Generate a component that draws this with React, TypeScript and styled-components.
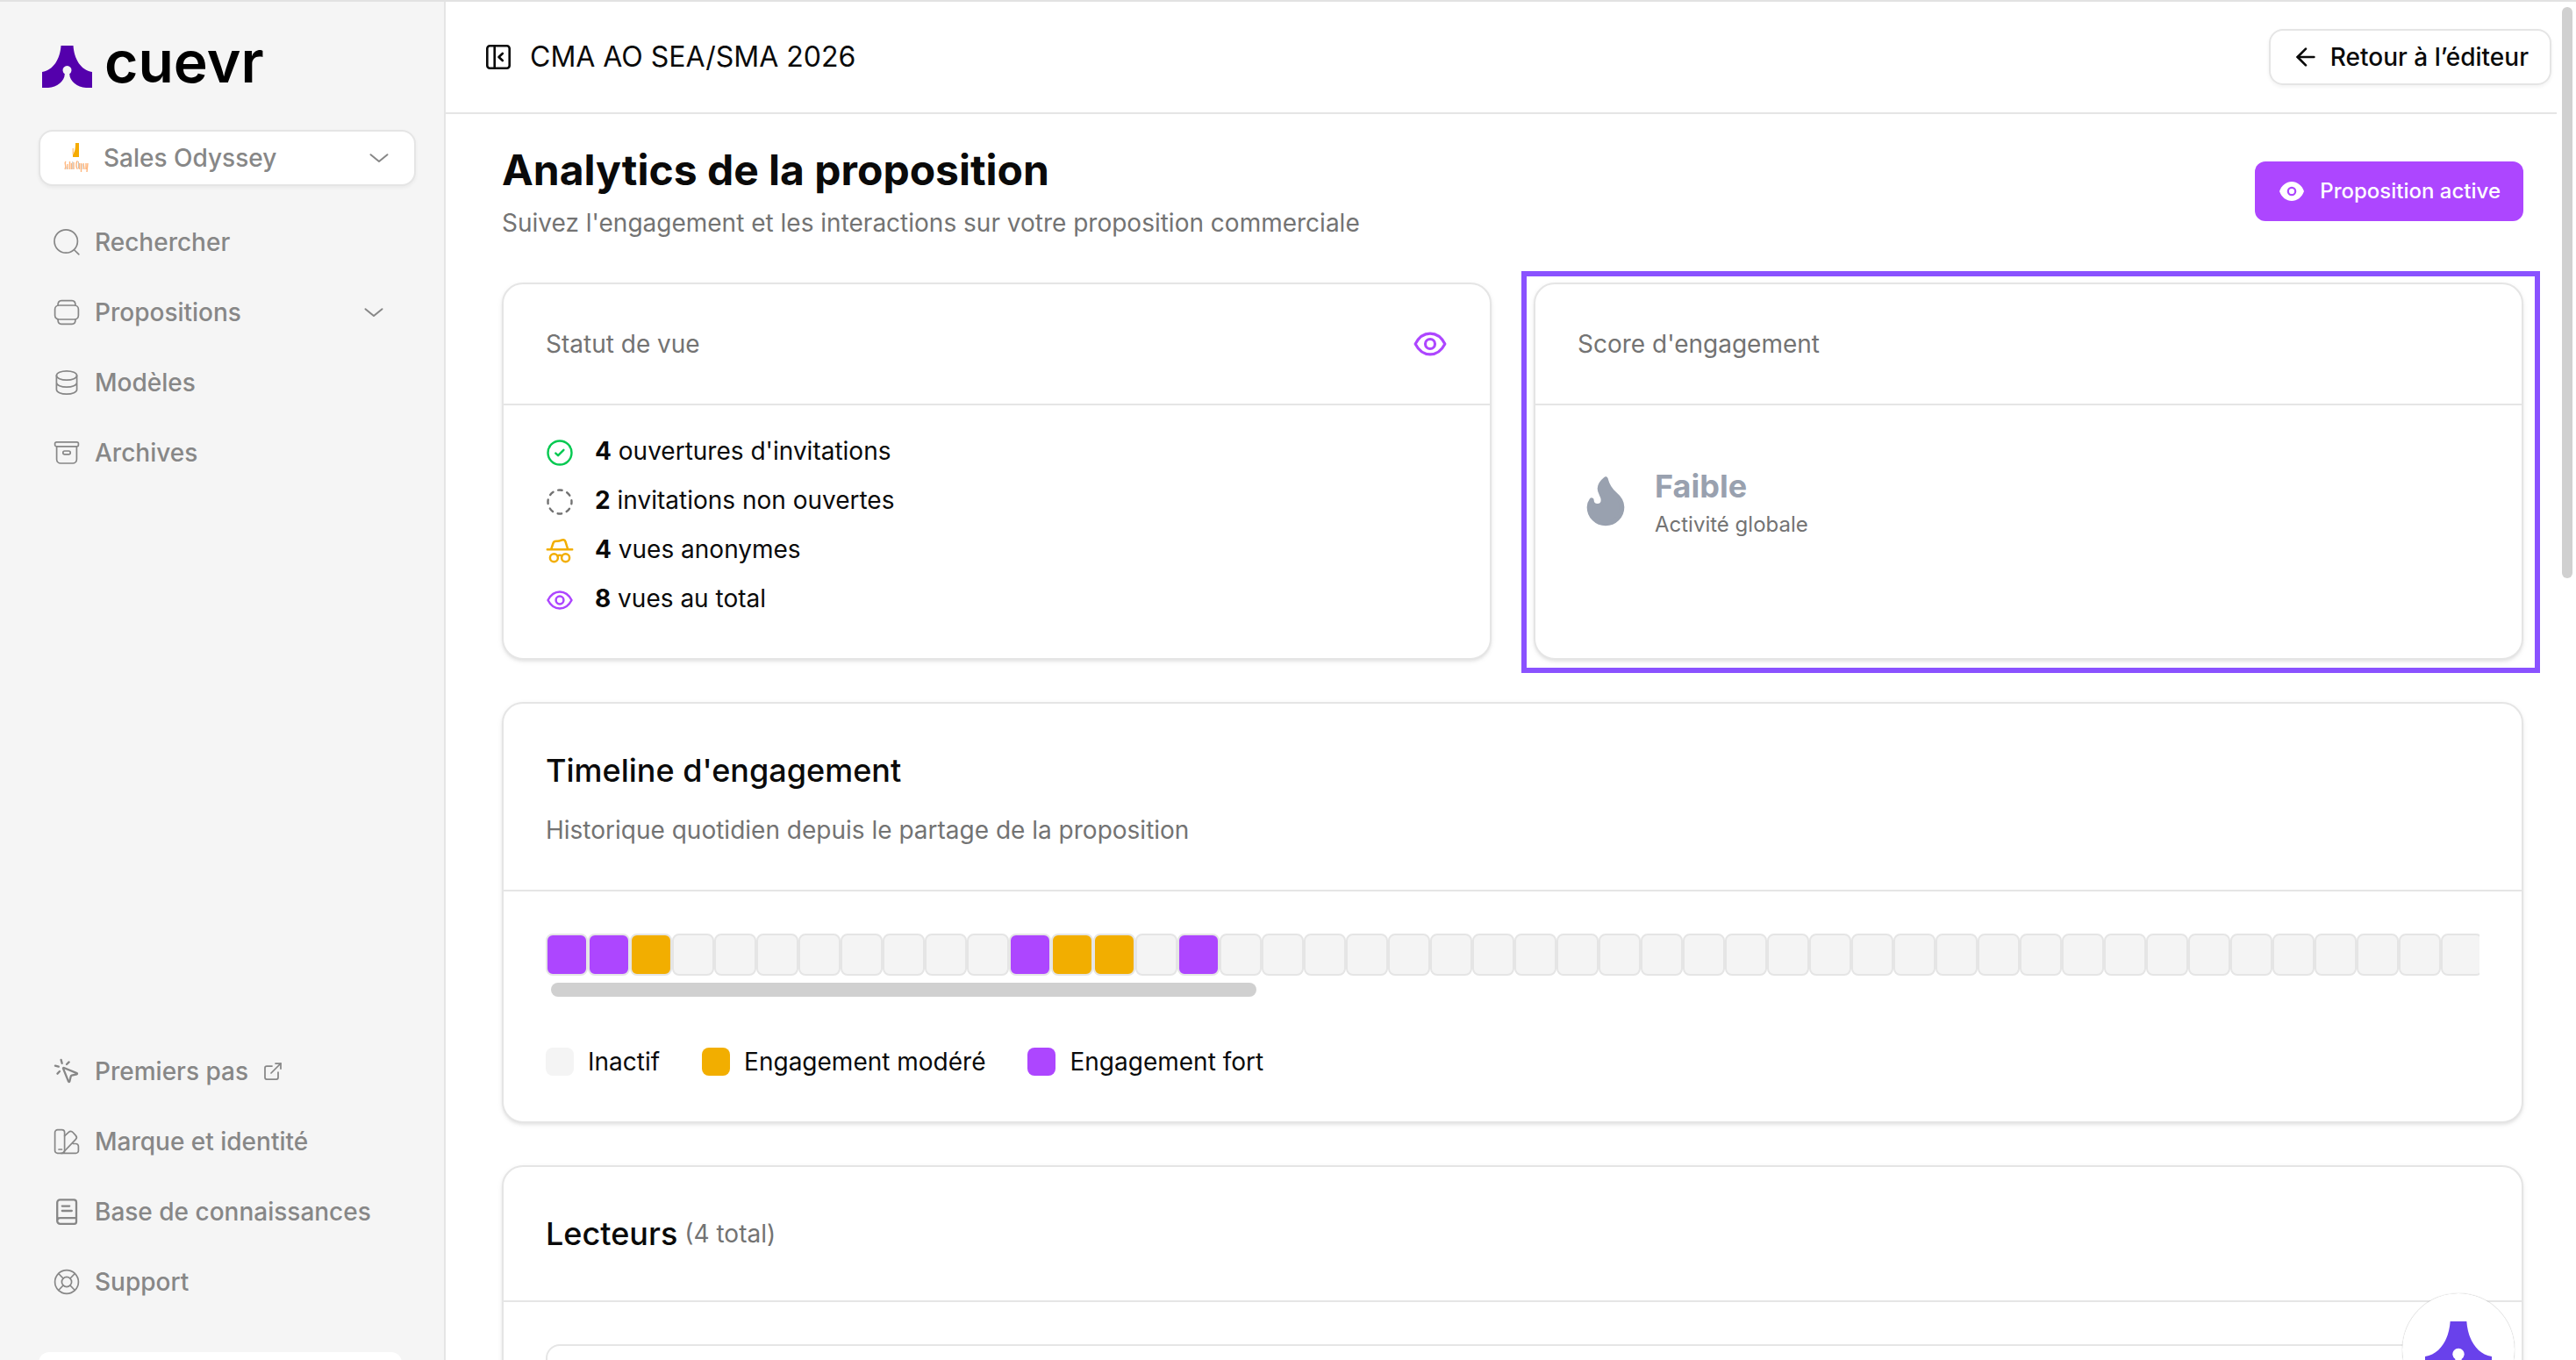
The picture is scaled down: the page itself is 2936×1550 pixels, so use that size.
import React from "react";
import styled, { createGlobalStyle } from "styled-components";
import { ArrowLeft, ExternalLink, Flame, MousePointerClick } from "lucide-react";

const color = {
  ink: "#0a0a0a",
  muted: "#737373",
  nav: "#878787",
  line: "#e5e5e5",
  panel: "#f5f5f5",
  purple: "#ad46ff",
  amber: "#f2ae00",
  green: "#05c951",
  slate: "#99a1af",
  thumb: "#d0d0d0",
  outline: "#8a52ff",
};

const GlobalStyle = createGlobalStyle`
  *, *::before, *::after { box-sizing: border-box; }
  body {
    margin: 0;
    background: #fff;
    color: ${color.ink};
    font-family: Inter, "Liberation Sans", sans-serif;
    font-size: 28px;
    line-height: 40px;
  }
  h1, h2, p, ul { margin: 0; padding: 0; }
  ul { list-style: none; }
  button, select { font: inherit; color: inherit; background: none; border: 0; padding: 0; margin: 0; }
  a { color: inherit; text-decoration: none; }
  svg { display: block; flex: none; }
`;

const Shell = styled.div`
  position: relative;
  display: flex;
  height: 100vh;
  overflow: hidden;
  border-top: 2px solid #e2e2e2;
`;

/* Sidebar */

const Sidebar = styled.aside`
  flex: none;
  display: flex;
  flex-direction: column;
  width: 508px;
  padding: 44px 32px 0 44px;
  background: ${color.panel};
  border-right: 2px solid ${color.line};
  color: ${color.nav};
  font-weight: 500;
`;

const Brand = styled.a`
  display: flex;
  align-items: center;
  gap: 14px;
  height: 60px;
  padding-left: 4px;
  color: #000;
  font-size: 66px;
  line-height: 60px;
  font-weight: 600;
`;

const BrandName = styled.span`
  padding-bottom: 12px;
`;

const Workspace = styled.label`
  display: flex;
  align-items: center;
  gap: 16px;
  height: 64px;
  margin-top: 42px;
  padding: 0 24px;
  background: #fff;
  border: 2px solid ${color.line};
  border-radius: 16px;
  box-shadow: 0 2px 4px rgba(0, 0, 0, 0.05);
`;

const WorkspaceSelect = styled.select`
  flex: 1;
  min-width: 0;
  appearance: none;
  outline: none;
`;

const Nav = styled.nav<{ $bottom?: boolean }>`
  display: flex;
  flex-direction: column;
  margin-top: ${(p) => (p.$bottom ? "auto" : "24px")};
  margin-right: 16px;
`;

const NavItem = styled.a`
  display: flex;
  align-items: center;
  gap: 16px;
  height: 80px;
  padding: 0 16px;
`;

const NavLabel = styled.span<{ $grow?: boolean }>`
  flex: ${(p) => (p.$grow ? 1 : "none")};
  text-align: left;
`;

const SidebarFooter = styled.div`
  flex: none;
  height: 9px;
  margin: 40px 16px 0 0;
`;

const FooterCard = styled.div`
  height: 120px;
  background: #fff;
  border-radius: 12px;
`;

/* Main area */

const Main = styled.main`
  flex: 1;
  min-width: 0;
  display: flex;
  flex-direction: column;
`;

const TopBar = styled.header`
  flex: none;
  display: flex;
  align-items: center;
  justify-content: space-between;
  height: 128px;
  padding: 0 6px 0 44px;
  border-bottom: 2px solid ${color.line};
`;

const Crumb = styled.div`
  display: flex;
  align-items: center;
  gap: 20px;
  font-size: 32px;
`;

const BackLink = styled.a`
  display: flex;
  align-items: center;
  gap: 12px;
  height: 64px;
  padding: 0 24px;
  border: 2px solid ${color.line};
  border-radius: 16px;
  box-shadow: 0 2px 4px rgba(0, 0, 0, 0.05);
  font-weight: 500;
`;

const Content = styled.div`
  flex: 1;
  min-height: 0;
  overflow: hidden;
  display: flex;
  flex-direction: column;
  gap: 48px;
  padding: 32px 38px 0 64px;
`;

const PageHead = styled.div`
  flex: none;
  display: flex;
  align-items: center;
  justify-content: space-between;
`;

const PageTitle = styled.h1`
  margin-bottom: 8px;
  font-size: 48px;
  line-height: 64px;
  font-weight: 700;
`;

const Muted = styled.p`
  color: ${color.muted};
`;

const ActiveButton = styled.button`
  display: flex;
  align-items: center;
  gap: 16px;
  height: 68px;
  padding: 0 26px;
  border-radius: 12px;
  background: ${color.purple};
  color: #fff;
  font-size: 24px;
  font-weight: 500;
`;

const CardRow = styled.div`
  flex: none;
  display: grid;
  grid-template-columns: 1fr 1fr;
  gap: 48px;
`;

const Card = styled.section`
  position: relative;
  flex: none;
  background: #fff;
  border: 2px solid ${color.line};
  border-radius: 24px;
  box-shadow: 0 2px 6px rgba(0, 0, 0, 0.06), 0 2px 3px rgba(0, 0, 0, 0.06);
`;

const CardHead = styled.div`
  display: flex;
  align-items: center;
  justify-content: space-between;
  padding: 48px;
  border-bottom: 2px solid ${color.line};
`;

const HeadIcon = styled.span`
  color: ${color.purple};
`;

const CardLabel = styled.h2`
  color: ${color.muted};
  font-size: 28px;
  font-weight: 400;
`;

const CardTitle = styled.h2`
  font-size: 36px;
  line-height: 56px;
  font-weight: 500;
`;

const TitleStack = styled.div`
  display: flex;
  flex-direction: column;
  gap: 20px;
`;

const TitleLine = styled.div`
  display: flex;
  align-items: center;
  gap: 8px;
`;

const StatList = styled.ul`
  display: flex;
  flex-direction: column;
  gap: 16px;
  padding: 32px 48px 48px;
`;

const Stat = styled.li<{ $tone: string }>`
  display: flex;
  align-items: flex-end;
  gap: 24px;
  height: 40px;

  svg {
    margin-bottom: 2px;
    color: ${(p) => p.$tone};
  }
  strong { font-weight: 700; }
`;

const Score = styled.div`
  display: flex;
  align-items: center;
  gap: 24px;
  padding: 64px 48px;
  color: ${color.slate};
`;

const ScoreName = styled.p`
  font-size: 36px;
  line-height: 56px;
  font-weight: 700;
`;

const ScoreNote = styled.p`
  color: ${color.muted};
  font-size: 24px;
  line-height: 32px;
`;

const Outline = styled.div`
  position: absolute;
  inset: -15px -21px -17px -16px;
  border: 6px solid ${color.outline};
  pointer-events: none;
`;

/* Timeline */

type Level = "none" | "mid" | "high";

const levelColor: Record<Level, string> = {
  none: "#f4f4f4",
  mid: color.amber,
  high: color.purple,
};

const CardBody = styled.div`
  padding: 48px;
`;

const Days = styled.ul`
  display: flex;
  overflow: hidden;
`;

const Day = styled.li<{ $level: Level }>`
  flex: none;
  width: 48px;
  height: 48px;
  background: ${(p) => levelColor[p.$level]};
  border: 2px solid ${color.line};
  border-radius: 8px;
`;

const DaysScroll = styled.div`
  margin: 8px 6px 54px;
`;

const DaysThumb = styled.div`
  height: 16px;
  border-radius: 8px;
  background: ${color.thumb};
`;

const Legend = styled.ul`
  display: flex;
  gap: 48px;
`;

const LegendItem = styled.li`
  display: flex;
  align-items: center;
  gap: 16px;
`;

const Swatch = styled.span<{ $level: Level }>`
  width: 32px;
  height: 32px;
  border-radius: 8px;
  background: ${(p) => levelColor[p.$level]};
`;

const ReaderBox = styled.div`
  height: 200px;
  border: 2px solid ${color.line};
  border-radius: 16px;
`;

/* Window chrome */

const Gutter = styled.div`
  flex: none;
  width: 22px;
  padding: 6px 4px 0 6px;
`;

const Thumb = styled.div`
  height: 42vh;
  border-radius: 6px;
  background: ${color.thumb};
`;

const ChatButton = styled.button`
  position: absolute;
  right: 70px;
  bottom: -52px;
  display: flex;
  align-items: center;
  justify-content: center;
  width: 128px;
  height: 128px;
  border-radius: 50%;
  background: #fff;
  box-shadow: 0 0 1px rgba(0, 0, 0, 0.4);
`;

/* Icons, drawn on a 32-unit grid */

type IconProps = { size?: number; weight?: number; children?: React.ReactNode };

const Icon = ({ size = 32, weight = 1.7, children }: IconProps) => (
  <svg
    width={size}
    height={size}
    viewBox="0 0 32 32"
    fill="none"
    stroke="currentColor"
    strokeWidth={weight}
    strokeLinecap="round"
    strokeLinejoin="round"
    aria-hidden="true"
  >
    {children}
  </svg>
);

const Chevron = () => (
  <Icon weight={2}>
    <path d="M6.5 12.2 16 20 25.5 12.2" />
  </Icon>
);

const SearchIcon = () => (
  <Icon>
    <circle cx="15.2" cy="15" r="13.2" />
    <path d="M24.8 25 29.8 29.8" />
  </Icon>
);

const StackIcon = () => (
  <Icon>
    <rect x="2.6" y="8" width="26.8" height="16" rx="4.5" />
    <path d="M6 8C6 4.5 7.2 2.6 10 2.6h12C24.8 2.6 26 4.5 26 8M6 24c0 3.5 1.2 5.4 4 5.4h12c2.8 0 4-1.9 4-5.4" />
  </Icon>
);

const DatabaseIcon = () => (
  <Icon>
    <ellipse cx="16" cy="8" rx="11.6" ry="5.2" />
    <path d="M4.4 8v16c0 2.9 5.2 5.2 11.6 5.2S27.6 26.9 27.6 24V8M4.4 16c0 2.9 5.2 5.2 11.6 5.2S27.6 18.9 27.6 16" />
  </Icon>
);

const ArchiveIcon = () => (
  <Icon>
    <rect x="2.6" y="3.8" width="26.8" height="5" rx="1.8" />
    <path d="M4.6 9v14.5a4.5 4.5 0 0 0 4.5 4.5h13.8a4.5 4.5 0 0 0 4.5-4.5V9" />
    <rect x="11.8" y="14" width="8.4" height="3.8" rx="1.9" />
  </Icon>
);

const PaletteIcon = () => (
  <Icon>
    <rect x="2.6" y="2.6" width="11" height="26.8" rx="3" />
    <path d="M7 25h3.5M13.6 9.6l4.7-4.3a3.3 3.3 0 0 1 4.7.2l3.3 3.6a3.3 3.3 0 0 1-.1 4.6L12 28.5M23.5 18.5h2.9a3 3 0 0 1 3 3v4.9a3 3 0 0 1-3 3H10" />
  </Icon>
);

const BookIcon = () => (
  <Icon weight={2.3}>
    <path d="M5.2 26.5V5.6A3.2 3.2 0 0 1 8.4 2.4h15.8a2.8 2.8 0 0 1 2.8 2.8v22.4a2.2 2.2 0 0 1-2.2 2.2H8.5a3.3 3.3 0 0 1 0-6.6H27M10.8 9.6h8.4M10.8 15h11" />
  </Icon>
);

const SupportIcon = () => (
  <Icon>
    <circle cx="16" cy="16" r="13.4" />
    <circle cx="16" cy="16" r="5.6" />
    <path d="m6.7 6.5 5.3 5.5M25.3 6.5 20 12M6.7 25.5 12 20M25.3 25.5 20 20" />
  </Icon>
);

const PanelIcon = () => (
  <Icon weight={2.6}>
    <rect x="3.3" y="3.3" width="25.4" height="25.4" rx="3" />
    <path d="M11.7 3.5v25M20.8 12l-4.3 4 4.3 4" />
  </Icon>
);

const EyeIcon = ({ size }: { size?: number }) => (
  <Icon size={size} weight={2.5}>
    <path d="M2.5 16C6 9.2 11 6.5 16 6.5S26 9.2 29.5 16C26 22.8 21 25.5 16 25.5S6 22.8 2.5 16Z" />
    <circle cx="16" cy="16" r="4.4" />
  </Icon>
);

const EyeSolidIcon = () => (
  <svg width="32" height="32" viewBox="0 0 32 32" aria-hidden="true">
    <path d="M2 16C4.5 9 10 5 16 5s11.500 4 14 11c-2.500 7-8 11-14 11S4.500 23 2 16Z" fill="currentColor" />
    <circle cx="16" cy="16" r="4.2" fill="none" stroke={color.purple} strokeWidth="2.2" />
  </svg>
);

const CheckIcon = () => (
  <Icon weight={2.4}>
    <circle cx="16" cy="16" r="13.5" />
    <path d="m11.3 16.6 2.8 2.6 6.3-6.4" />
  </Icon>
);

const DashedIcon = () => (
  <Icon weight={2.4}>
    <circle cx="16" cy="16" r="13.5" strokeDasharray="4.6 6" strokeDashoffset="2.3" />
  </Icon>
);

const IncognitoIcon = () => (
  <Icon weight={2.5}>
    <path d="M1.800 14.200h28.400M6.200 14 8.500 7c.6-1.900 2-2.300 4-2.200 2 .1 3 0 4.700-.9 2.300-1.200 4.600-.9 5.300 1.500L25.200 14" />
    <circle cx="9.4" cy="23.8" r="4.5" />
    <circle cx="22.6" cy="23.8" r="4.5" />
    <path d="M13.400 21.400c1.700-.8 3.500-.8 5.200 0" />
  </Icon>
);

const CuevrMark = ({ width, height, fill }: { width: number; height: number; fill: string }) => (
  <svg width={width} height={height} viewBox="0 0 57 48" fill={fill} role="img" aria-label="Cuevr">
    <path d="M21.500 0h14C36.500 15 44 28 57 30V48H50C40 47 31.500 41 31.200 32.200A5 5 0 1 0 25.800 32.200C25.500 41 17 47 7 48H0V30C13 28 20.500 15 21.500 0Z" />
  </svg>
);

const OdysseyMark = () => (
  <svg width="32" height="36" viewBox="0 0 32 36" fill="none" aria-hidden="true">
    <path d="M16 1h4v16h-7v-3c2-2 3-6 3-13Z" fill="#f5ab00" />
    <path d="M13.300 7v7" stroke="#ffc987" strokeWidth="1.500" />
    <path d="M5 22c-3 3 2 4-1 9M7 25v6M9.500 22v9M11.500 24v7M14 23v8M18.500 21.500c-2 1-2 8 0 9M20.500 24v7M22.500 24v10M25 24l1 7M28 24v7M30 24l-1 10" stroke="#ffb67d" strokeWidth="1.400" />
    <path d="M6 28v3M12.800 22v9M19.500 22v8M24 25v6" stroke="#c9c3bd" strokeWidth="1" />
  </svg>
);

/* Data */

const DAY_COUNT = 125;
const activity: Record<number, Level> = {
  0: "high",
  1: "high",
  2: "mid",
  11: "high",
  12: "mid",
  13: "mid",
  15: "high",
};
const days: Level[] = Array.from({ length: DAY_COUNT }, (_, i) => activity[i] ?? "none");
const visibleShare = 2200 / (DAY_COUNT * 48);

const stats = [
  { icon: <CheckIcon />, tone: color.green, count: 4, text: "ouvertures d'invitations" },
  { icon: <DashedIcon />, tone: color.muted, count: 2, text: "invitations non ouvertes" },
  { icon: <IncognitoIcon />, tone: color.amber, count: 4, text: "vues anonymes" },
  { icon: <EyeIcon />, tone: color.purple, count: 8, text: "vues au total" },
];

const legend: { level: Level; text: string }[] = [
  { level: "none", text: "Inactif" },
  { level: "mid", text: "Engagement modéré" },
  { level: "high", text: "Engagement fort" },
];

export default function App() {
  return (
    <>
      <GlobalStyle />
      <Shell>
        <Sidebar>
          <Brand href="#">
            <CuevrMark width={57} height={48} fill="#5400ac" />
            <BrandName>cuevr</BrandName>
          </Brand>
          <Workspace>
            <OdysseyMark />
            <WorkspaceSelect aria-label="Espace de travail">
              <option>Sales Odyssey</option>
            </WorkspaceSelect>
            <Chevron />
          </Workspace>
          <Nav aria-label="Navigation principale">
            <NavItem href="#rechercher">
              <SearchIcon />
              <NavLabel>Rechercher</NavLabel>
            </NavItem>
            <NavItem as="button" type="button" aria-expanded="false">
              <StackIcon />
              <NavLabel $grow>Propositions</NavLabel>
              <Chevron />
            </NavItem>
            <NavItem href="#modeles">
              <DatabaseIcon />
              <NavLabel>Modèles</NavLabel>
            </NavItem>
            <NavItem href="#archives">
              <ArchiveIcon />
              <NavLabel>Archives</NavLabel>
            </NavItem>
          </Nav>
          <Nav $bottom aria-label="Aide">
            <NavItem href="#premiers-pas">
              <MousePointerClick size={32} strokeWidth={1.75} />
              <NavLabel>Premiers pas</NavLabel>
              <ExternalLink size={24} strokeWidth={1.75} />
            </NavItem>
            <NavItem href="#marque">
              <PaletteIcon />
              <NavLabel>Marque et identité</NavLabel>
            </NavItem>
            <NavItem href="#base">
              <BookIcon />
              <NavLabel>Base de connaissances</NavLabel>
            </NavItem>
            <NavItem href="#support">
              <SupportIcon />
              <NavLabel>Support</NavLabel>
            </NavItem>
          </Nav>
          <SidebarFooter>
            <FooterCard />
          </SidebarFooter>
        </Sidebar>

        <Main>
          <TopBar>
            <Crumb>
              <button type="button" aria-label="Replier le menu">
                <PanelIcon />
              </button>
              <span>CMA AO SEA/SMA 2026</span>
            </Crumb>
            <BackLink href="#editeur">
              <ArrowLeft size={32} strokeWidth={2} />
              Retour à l’éditeur
            </BackLink>
          </TopBar>

          <Content>
            <PageHead>
              <div>
                <PageTitle>Analytics de la proposition</PageTitle>
                <Muted>Suivez l'engagement et les interactions sur votre proposition commerciale</Muted>
              </div>
              <ActiveButton type="button">
                <EyeSolidIcon />
                Proposition active
              </ActiveButton>
            </PageHead>

            <CardRow>
              <Card>
                <CardHead>
                  <CardLabel>Statut de vue</CardLabel>
                  <HeadIcon>
                    <EyeIcon size={40} />
                  </HeadIcon>
                </CardHead>
                <StatList>
                  {stats.map((s) => (
                    <Stat key={s.text} $tone={s.tone}>
                      {s.icon}
                      <span>
                        <strong>{s.count}</strong> {s.text}
                      </span>
                    </Stat>
                  ))}
                </StatList>
              </Card>
              <Card>
                <CardHead>
                  <CardLabel>Score d'engagement</CardLabel>
                </CardHead>
                <Score>
                  <Flame size={64} fill="currentColor" />
                  <div>
                    <ScoreName>Faible</ScoreName>
                    <ScoreNote>Activité globale</ScoreNote>
                  </div>
                </Score>
                <Outline />
              </Card>
            </CardRow>

            <Card>
              <CardHead>
                <TitleStack>
                  <CardTitle>Timeline d'engagement</CardTitle>
                  <Muted>Historique quotidien depuis le partage de la proposition</Muted>
                </TitleStack>
              </CardHead>
              <CardBody>
                <Days>
                  {days.map((level, i) => (
                    <Day key={i} $level={level} />
                  ))}
                </Days>
                <DaysScroll>
                  <DaysThumb style={{ width: `${visibleShare * 100}%` }} />
                </DaysScroll>
                <Legend>
                  {legend.map((l) => (
                    <LegendItem key={l.level}>
                      <Swatch $level={l.level} />
                      {l.text}
                    </LegendItem>
                  ))}
                </Legend>
              </CardBody>
            </Card>

            <Card>
              <CardHead>
                <TitleLine>
                  <CardTitle>Lecteurs</CardTitle>
                  <Muted>(4 total)</Muted>
                </TitleLine>
              </CardHead>
              <CardBody>
                <ReaderBox />
              </CardBody>
            </Card>
          </Content>
        </Main>

        <Gutter>
          <Thumb />
        </Gutter>

        <ChatButton type="button" aria-label="Ouvrir le chat">
          <CuevrMark width={76} height={64} fill="#6941eb" />
        </ChatButton>
      </Shell>
    </>
  );
}
